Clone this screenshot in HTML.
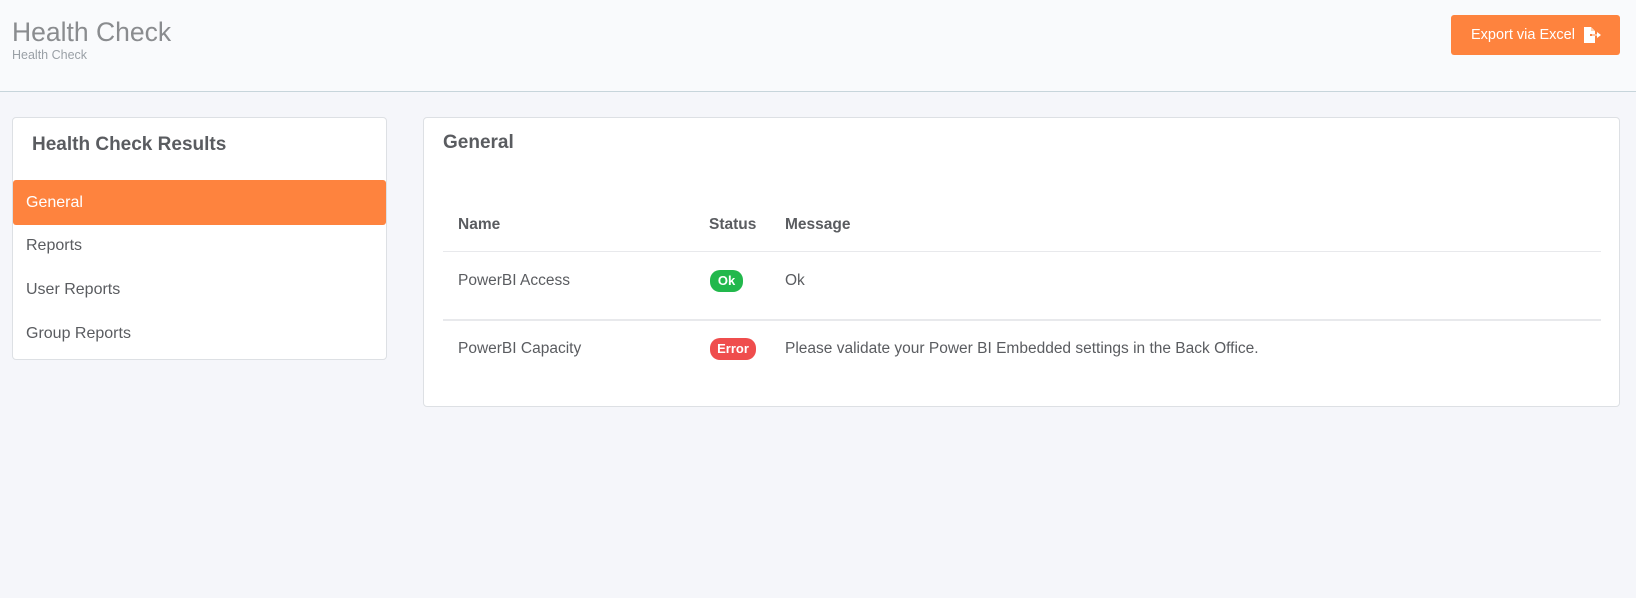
<!DOCTYPE html>
<html><head><style>
*{box-sizing:border-box;margin:0;padding:0}
body{width:1636px;height:598px;background:#f5f6fa;font-family:"Liberation Sans",sans-serif;color:#5a5c60;position:relative;overflow:hidden}
.top{position:absolute;left:0;top:0;width:1636px;height:92px;background:#f9fafc;border-bottom:1px solid #c7d5db}
.t1{position:absolute;left:12px;top:17px;font-size:26.5px;color:#8a8c8f}
.t2{position:absolute;left:12px;top:48px;font-size:12.5px;color:#9aa0a6}
.btn{position:absolute;left:1451px;top:15px;width:169px;height:40px;background:#fe833e;border-radius:3px;color:#fff;font-size:14.5px;line-height:40px;padding-left:20px}
.btn svg{position:absolute;left:132px;top:12px}
.card{position:absolute;background:#fff;border:1px solid #dde0e4;border-radius:4px}
.side{left:12px;top:117px;width:375px;height:243px}
.side h3{position:absolute;left:19px;top:16px;font-size:19px;font-weight:bold;color:#5a5c60}
.item{position:absolute;left:0;width:373px;height:45px;line-height:45px;padding-left:13px;font-size:16px}
.act{background:#fe833e;color:#fff;border-radius:3px}
.main{left:423px;top:117px;width:1197px;height:290px}
.main h3{position:absolute;left:19px;top:14px;font-size:19px;font-weight:bold}
.th{position:absolute;top:98px;font-size:15.5px;font-weight:bold}
.td{position:absolute;font-size:15.5px}
.line{position:absolute;left:19px;width:1158px;height:1px;background:#e8e9ec}
.b{position:absolute;color:#fff;font-weight:bold;font-size:13px;border-radius:10px;height:22px;line-height:22px;text-align:center}
</style></head><body>
<div class="top"><div class="t1">Health Check</div><div class="t2">Health Check</div>
<div class="btn">Export via Excel<svg width="18" height="16" viewBox="0 0 18 16"><path d="M1 0h7l4 4v3H7v2h5v7H1z" fill="#fff"/><path d="M8 0v4h4" fill="#fed0b0"/><path d="M9 7.5h5V5l4 3-4 3V8.5H9z" fill="#fff"/></svg></div></div>
<div class="card side"><h3>Health Check Results</h3>
<div class="item act" style="top:62px">General</div>
<div class="item" style="top:105px">Reports</div>
<div class="item" style="top:149px">User Reports</div>
<div class="item" style="top:193px">Group Reports</div></div>
<div class="card main"><h3>General</h3>
<div class="th" style="left:34px">Name</div><div class="th" style="left:285px">Status</div><div class="th" style="left:361px">Message</div>
<div class="line" style="top:133px"></div>
<div class="td" style="left:34px;top:154px">PowerBI Access</div>
<div class="b" style="left:286px;top:152px;width:33px;background:#22b84c">Ok</div>
<div class="td" style="left:361px;top:154px">Ok</div>
<div class="line" style="top:201px;height:2px"></div>
<div class="td" style="left:34px;top:222px">PowerBI Capacity</div>
<div class="b" style="left:286px;top:220px;width:46px;background:#ef4d4d">Error</div>
<div class="td" style="left:361px;top:222px">Please validate your Power BI Embedded settings in the Back Office.</div>
</div>
</body></html>
